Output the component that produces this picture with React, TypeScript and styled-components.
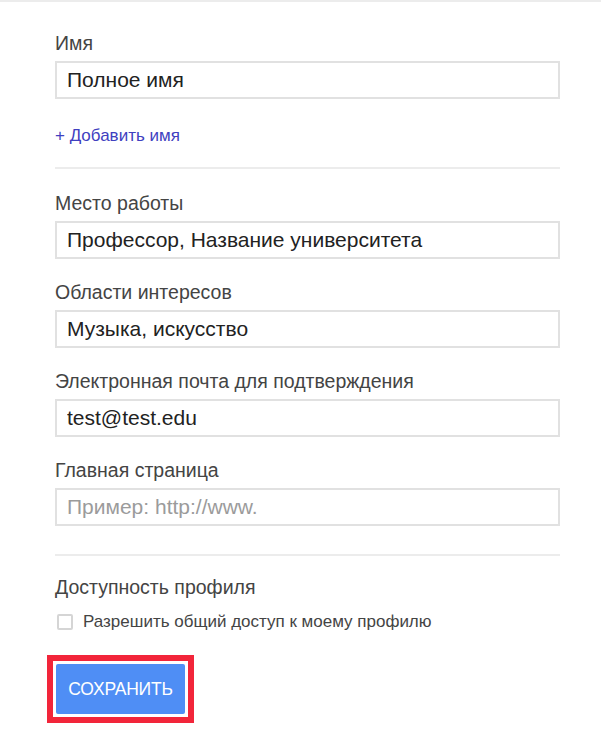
import React, {useState} from "react";
import styled, {createGlobalStyle} from "styled-components";

const GlobalStyle = createGlobalStyle`
  html, body {
    margin: 0;
    padding: 0;
    background: #fff;
  }
  body {
    font-family: "Liberation Sans", Arial, sans-serif;
  }
`;

const Page = styled.div`
  width: 601px;
  min-height: 732px;
  border-top: 2px solid #ececec;
  box-sizing: border-box;
  padding: 30px 41px 0 55px;
`;

const Section = styled.div`
  display: flex;
  flex-direction: column;
`;

const Label = styled.div`
  font-size: 19.5px;
  line-height: 22px;
  color: #444;
  margin-bottom: 7px;
`;

const Field = styled.div`
  display: flex;
  flex-direction: column;
  & + & {
    margin-top: 22px;
  }
`;

const TextInput = styled.input`
  box-sizing: border-box;
  width: 505px;
  height: 38px;
  border: 2px solid #e1e1e1;
  border-radius: 0;
  padding: 0 10px;
  font-family: "Liberation Sans", Arial, sans-serif;
  font-size: 21px;
  color: #222;
  outline: none;
  &::placeholder {
    color: #9b9b9b;
  }
`;

const AddLink = styled.a`
  font-size: 17px;
  line-height: 20px;
  color: #4040c0;
  text-decoration: none;
  margin: 27px 0 21px;
  cursor: pointer;
`;

const Divider = styled.div<{top: number; bottom: number}>`
  width: 505px;
  height: 2px;
  background: #ececec;
  margin: ${p => `${p.top}px 0 ${p.bottom}px`};
`;

const CheckRow = styled.label`
  display: flex;
  align-items: center;
  gap: 10px;
  height: 20px;
  margin-top: 7px;
  padding-left: 2px;
  font-size: 17px;
  color: #444;
  cursor: pointer;
`;

const Box = styled.span<{checked: boolean}>`
  box-sizing: border-box;
  width: 16px;
  height: 16px;
  border: 2px solid #d5d5d5;
  border-radius: 2px;
  background: ${p => (p.checked ? "#4e8ef7" : "#fff")};
`;

const Highlight = styled.div`
  display: inline-block;
  margin: 23px 0 0 -8px;
  border: 6px solid #f2253a;
  padding: 3px;
  background: #fff;
`;

const SaveButton = styled.button`
  display: block;
  width: 129px;
  height: 50px;
  border: none;
  border-radius: 2px;
  background: #4f8ef5;
  color: #fff;
  font-family: "Liberation Sans", Arial, sans-serif;
  font-size: 17.5px;
  letter-spacing: -0.2px;
  cursor: pointer;
`;

const fields = [
  {label: "Место работы", value: "Профессор, Название университета"},
  {label: "Области интересов", value: "Музыка, искусство"},
  {label: "Электронная почта для подтверждения", value: "test@test.edu"},
  {label: "Главная страница", value: "", placeholder: "Пример: http://www."},
];

export default function App() {
  const [shared, setShared] = useState(false);

  return (
    <>
      <GlobalStyle/>
      <Page>
        <Section>
          <Field>
            <Label>Имя</Label>
            <TextInput defaultValue="Полное имя"/>
          </Field>
          <AddLink>+ Добавить имя</AddLink>
        </Section>
        <Divider top={0} bottom={23}/>
        <Section>
          {fields.map(f => (
            <Field key={f.label}>
              <Label>{f.label}</Label>
              <TextInput defaultValue={f.value} placeholder={f.placeholder}/>
            </Field>
          ))}
        </Section>
        <Divider top={28} bottom={20}/>
        <Section>
          <Label>Доступность профиля</Label>
          <CheckRow onClick={() => setShared(!shared)}>
            <Box checked={shared}/>
            Разрешить общий доступ к моему профилю
          </CheckRow>
        </Section>
        <Highlight>
          <SaveButton>СОХРАНИТЬ</SaveButton>
        </Highlight>
      </Page>
    </>
  );
}
